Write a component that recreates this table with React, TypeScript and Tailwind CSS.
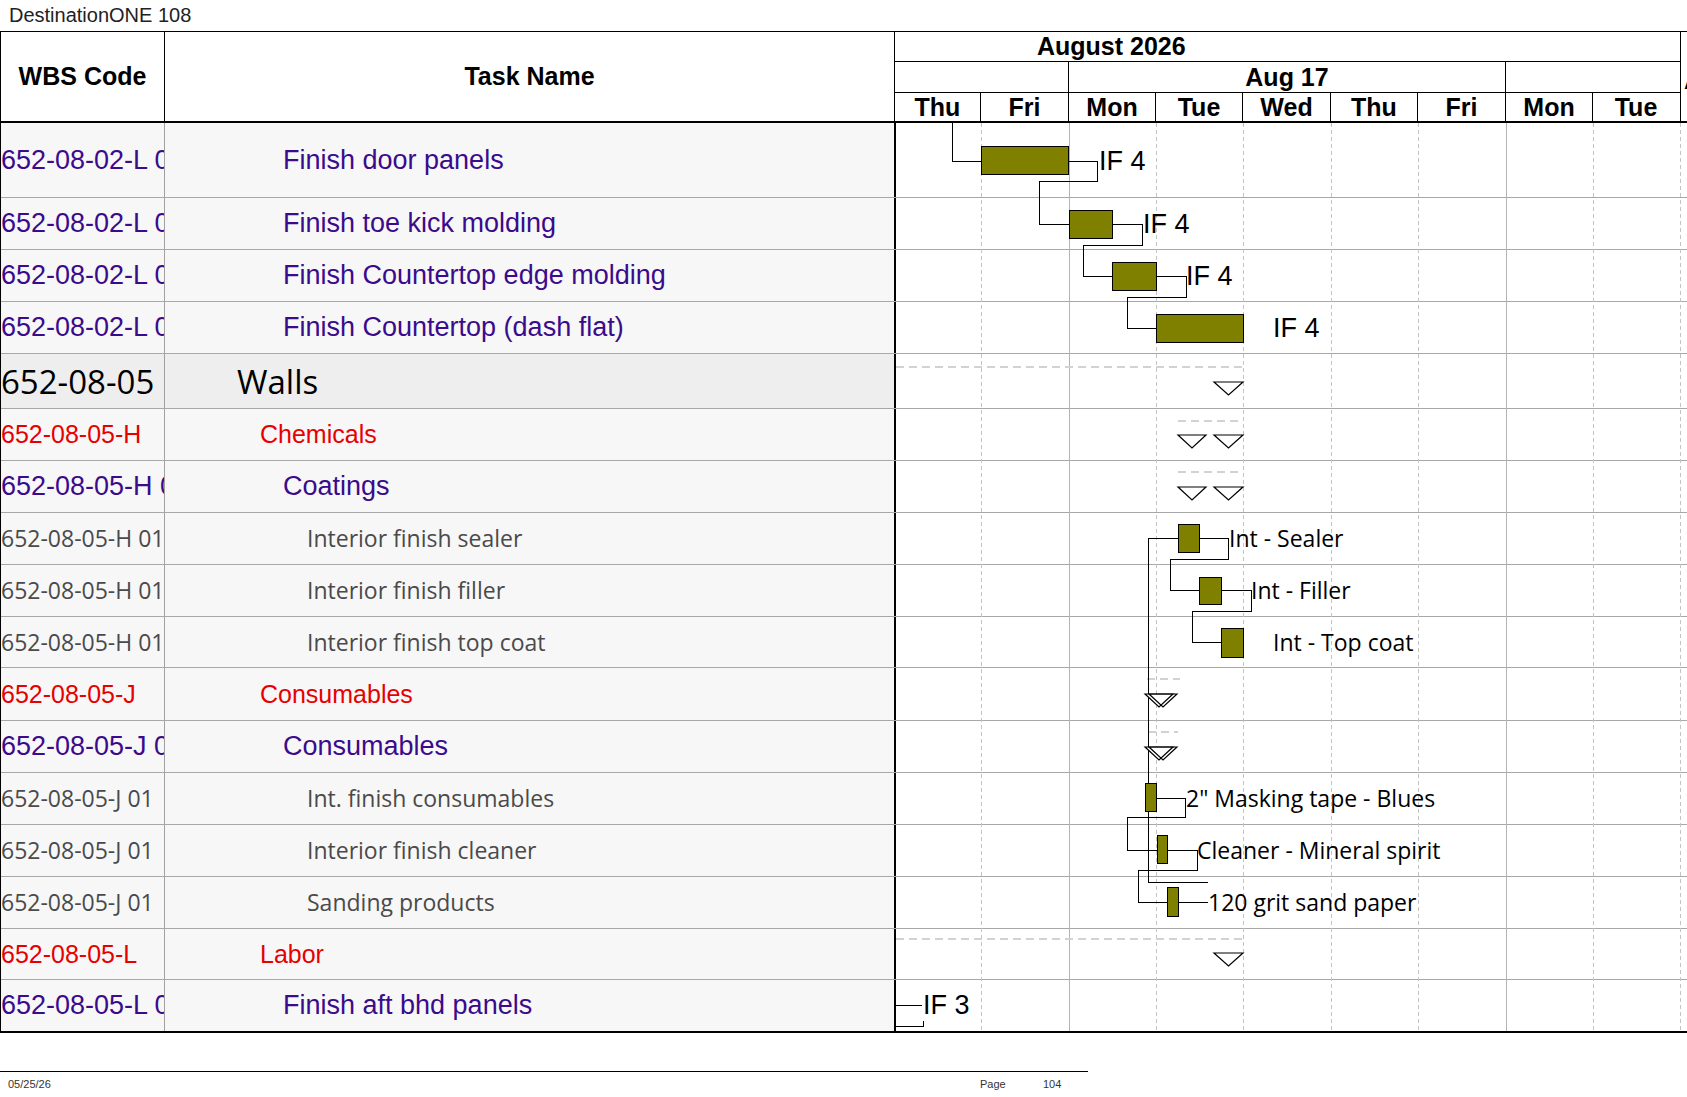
import React from "react";

type Kind = "purple" | "walls" | "red" | "gray";

const rows: { h: number; kind: Kind; code: string; name: string }[] = [
  { h: 75, kind: "purple", code: "652-08-02-L 01", name: "Finish door panels" },
  { h: 52, kind: "purple", code: "652-08-02-L 02", name: "Finish toe kick molding" },
  { h: 52, kind: "purple", code: "652-08-02-L 03", name: "Finish Countertop edge molding" },
  { h: 52, kind: "purple", code: "652-08-02-L 04", name: "Finish Countertop (dash flat)" },
  { h: 55, kind: "walls", code: "652-08-05", name: "Walls" },
  { h: 52, kind: "red", code: "652-08-05-H", name: "Chemicals" },
  { h: 52, kind: "purple", code: "652-08-05-H 01", name: "Coatings" },
  { h: 52, kind: "gray", code: "652-08-05-H 0101", name: "Interior finish sealer" },
  { h: 52, kind: "gray", code: "652-08-05-H 0102", name: "Interior finish filler" },
  { h: 51, kind: "gray", code: "652-08-05-H 0103", name: "Interior finish top coat" },
  { h: 53, kind: "red", code: "652-08-05-J", name: "Consumables" },
  { h: 52, kind: "purple", code: "652-08-05-J 01", name: "Consumables" },
  { h: 52, kind: "gray", code: "652-08-05-J 01", name: "Int. finish consumables" },
  { h: 52, kind: "gray", code: "652-08-05-J 01", name: "Interior finish cleaner" },
  { h: 52, kind: "gray", code: "652-08-05-J 01", name: "Sanding products" },
  { h: 51, kind: "red", code: "652-08-05-L", name: "Labor" },
  { h: 53, kind: "purple", code: "652-08-05-L 01", name: "Finish aft bhd panels" },
];

const textCls: Record<Kind, string> = {
  purple: "font-['Liberation_Sans'] text-[27px] text-[#3b0b8b]",
  walls: "font-['Open_Sans'] text-[33px] text-black",
  red: "font-['Liberation_Sans'] text-[25px] text-[#e60000]",
  gray: "font-['Open_Sans'] text-[23px] text-[#4a4a4a]",
};

const indentCls: Record<Kind, string> = {
  purple: "pl-[118px]",
  walls: "pl-[72px]",
  red: "pl-[95px]",
  gray: "pl-[142px]",
};

const days = [
  { label: "Thu", w: "w-[86px]" },
  { label: "Fri", w: "w-[88px]" },
  { label: "Mon", w: "w-[87px]" },
  { label: "Tue", w: "w-[87px]" },
  { label: "Wed", w: "w-[88px]" },
  { label: "Thu", w: "w-[87px]" },
  { label: "Fri", w: "w-[88px]" },
  { label: "Mon", w: "w-[87px]" },
  { label: "Tue", w: "w-[86px]" },
];

const gridX = [981, 1069, 1156, 1243, 1331, 1418, 1506, 1593, 1680];
const weekX = [1069, 1506];

const bars = [
  [981, 146, 87, 28],
  [1069, 210, 43, 28],
  [1112, 262, 44, 28],
  [1156, 314, 87, 28],
  [1178, 524, 21, 28],
  [1199, 577, 22, 27],
  [1221, 628, 22, 29],
  [1145, 783, 11, 28],
  [1157, 835, 10, 28],
  [1167, 887, 11, 29],
];

const links = [
  "M981 161.5H952.5V123",
  "M1068 161.5H1097.5V181.5H1039.5V224.5H1069",
  "M1112 224.5H1142.5V245.5H1083.5V276.5H1112",
  "M1156 276.5H1186.5V297.5H1127.5V328.5H1156",
  "M1178 538.5H1148.5V882.5H1208",
  "M1199 538.5H1228.5V559.5H1170.5V590.5H1199",
  "M1221 590.5H1251.5V611.5H1192.5V642.5H1221",
  "M1156 798.5H1185.5V817.5H1127.5V850.5H1157",
  "M1167 850.5H1197.5V870.5H1138.5V902.5H1167",
  "M1178 902.5H1208",
  "M896 1005.5H922",
  "M896 1026.5H923.5V1021",
];

const tris: [number, number, number][] = [
  [1214, 382, 29],
  [1178, 435, 28],
  [1214, 435, 29],
  [1178, 487, 28],
  [1214, 487, 29],
  [1145, 694, 28],
  [1149, 694, 28],
  [1145, 747, 28],
  [1149, 747, 28],
  [1214, 953, 29],
];

const dashes: [number, number, number][] = [
  [896, 1243, 367],
  [1178, 1243, 421],
  [1178, 1243, 472],
  [1147, 1180, 679],
  [1148, 1178, 732],
  [896, 1243, 939],
];

const labels: [number, number, string, boolean][] = [
  [1099, 161, "IF 4", true],
  [1143, 224, "IF 4", true],
  [1186, 276, "IF 4", true],
  [1273, 328, "IF 4", true],
  [1229, 538, "Int - Sealer", false],
  [1251, 590, "Int - Filler", false],
  [1273, 642, "Int - Top coat", false],
  [1186, 798, '2" Masking tape - Blues', false],
  [1197, 850, "Cleaner - Mineral spirit", false],
  [1208, 902, "120 grit sand paper", false],
  [923, 1005, "IF 3", true],
];

function GanttDrawing() {
  return (
    <svg
      className="absolute left-[894px] top-[123px]"
      width={793}
      height={910}
      viewBox="894 123 793 910"
    >
      <g shapeRendering="crispEdges">
        {gridX.map((x) =>
          weekX.includes(x) ? (
            <line key={x} x1={x + 0.5} x2={x + 0.5} y1={123} y2={1031} stroke="#b4b4b4" strokeWidth={1} />
          ) : (
            <line key={x} x1={x + 0.5} x2={x + 0.5} y1={123} y2={1031} stroke="#c4c4c4" strokeWidth={1} strokeDasharray="4 3" />
          )
        )}
        {dashes.map(([x1, x2, y], i) => (
          <line key={i} x1={x1} x2={x2} y1={y} y2={y} stroke="#d2d2d2" strokeWidth={2} strokeDasharray="8 5" />
        ))}
        {links.map((d, i) => (
          <path key={i} d={d} fill="none" stroke="#000" strokeWidth={1} />
        ))}
        {bars.map(([x, y, w, h], i) => (
          <rect key={i} x={x + 0.5} y={y + 0.5} width={w} height={h} fill="#808000" stroke="#000" strokeWidth={1} />
        ))}
      </g>
      {tris.map(([x, y, w], i) => (
        <polygon
          key={i}
          points={`${x},${y} ${x + w},${y} ${x + w / 2},${y + 13}`}
          fill={i === 6 || i === 8 ? "none" : "#fff"}
          stroke="#000"
          strokeWidth={1.2}
        />
      ))}
      {labels.map(([x, y, t, arial], i) => (
        <text
          key={i}
          x={x}
          y={y}
          dominantBaseline="central"
          fontFamily={arial ? "Liberation Sans, Arial, sans-serif" : "Open Sans, sans-serif"}
          fontSize={arial ? 27 : 23}
          fill="#000"
        >
          {t}
        </text>
      ))}
    </svg>
  );
}

function Header() {
  return (
    <div className="flex h-[91px] border-b-2 border-black font-['Liberation_Sans'] text-[25px] font-bold text-black">
      <div className="flex w-[164px] items-center justify-center border-r border-black">WBS Code</div>
      <div className="flex w-[730px] items-center justify-center border-r border-black">Task Name</div>
      <div className="relative flex w-[786px] flex-col border-r border-black">
        <div className="flex h-[30px] items-center border-b border-black pl-[142px] leading-none">August 2026</div>
        <div className="flex h-[31px] border-b border-black leading-none">
          <div className="w-[174px] border-r border-black" />
          <div className="flex w-[437px] items-center justify-center border-r border-black">Aug 17</div>
          <div className="flex-1" />
          <div className="absolute right-[-9px] top-[36px] w-[5px] overflow-hidden">A</div>
        </div>
        <div className="flex flex-1 leading-none">
          {days.map((d, i) => (
            <div
              key={i}
              className={`${d.w} flex items-center justify-center ${i < days.length - 1 ? "border-r border-black" : ""}`}
            >
              {d.label}
            </div>
          ))}
        </div>
      </div>
    </div>
  );
}

export default function App() {
  return (
    <div className="relative h-[1097px] w-[1687px] overflow-hidden bg-white">
      <div className="h-[31px] pl-[9px] pt-[3px] font-['Liberation_Sans'] text-[20px] leading-[24px] text-[#222]">
        DestinationONE 108
      </div>

      <div className="border-l border-t border-black">
        <Header />
        <div>
          {rows.map((r, i) => {
            const last = i === rows.length - 1;
            const bg = r.kind === "walls" ? "bg-[#eeeeee]" : "bg-[#f7f7f7]";
            return (
              <div
                key={i}
                style={{ height: r.h }}
                className={`flex ${last ? "border-b-2 border-black" : "border-b border-[#a8a8a8]"}`}
              >
                <div
                  className={`flex w-[164px] items-center overflow-hidden whitespace-nowrap border-r border-[#a0a0a0] leading-none ${bg} ${textCls[r.kind]}`}
                >
                  {r.code}
                </div>
                <div
                  className={`flex w-[729px] items-center whitespace-nowrap leading-none ${bg} ${indentCls[r.kind]} ${textCls[r.kind]}`}
                >
                  {r.name}
                </div>
                <div className="flex-1 border-l-2 border-black bg-white" />
              </div>
            );
          })}
        </div>
      </div>

      <GanttDrawing />

      <div className="mt-[38px] w-[1088px] border-t border-black" />
      <div className="flex h-[24px] items-center font-['Liberation_Sans'] text-[11px] text-[#333]">
        <span className="w-[980px] pl-[8px]">05/25/26</span>
        <span className="w-[63px]">Page</span>
        <span>104</span>
      </div>
    </div>
  );
}
